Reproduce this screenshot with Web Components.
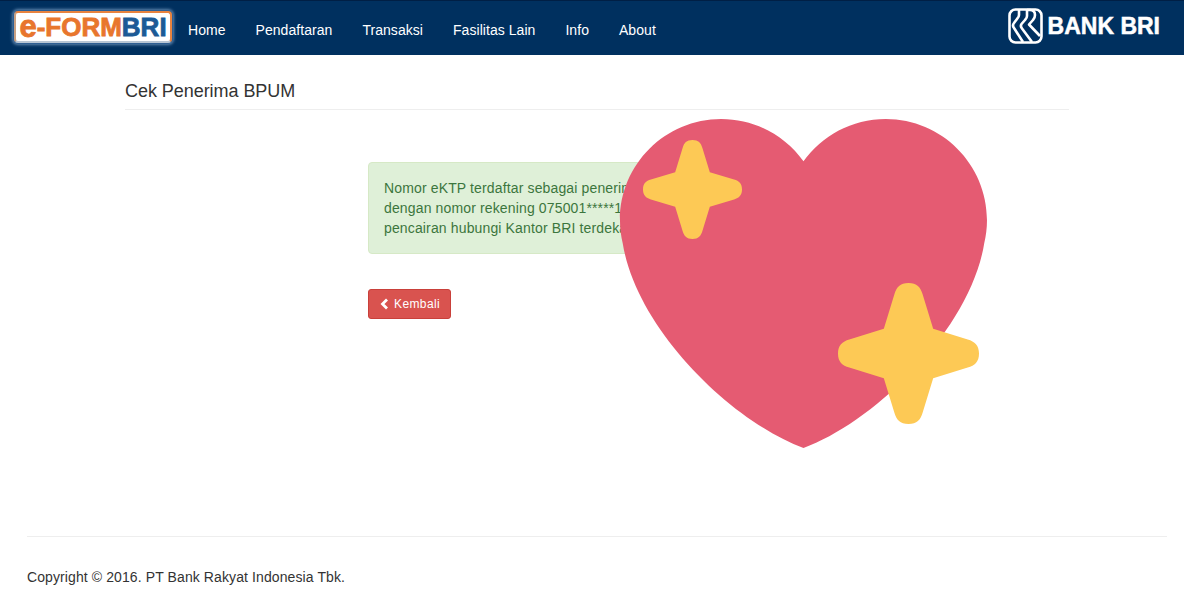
<!DOCTYPE html>
<html>
<head>
<meta charset="utf-8">
<title>Cek Penerima BPUM</title>
<style>
  html, body { margin: 0; padding: 0; background: #fff; }
  body { font: 14px/20px "Liberation Sans", Arial, sans-serif; color: #333; min-height: 616px; position: relative; overflow: hidden; }
  main { display: flow-root; height: 481px; }
</style>
</head>
<body>
<top-nav></top-nav>
<main>
  <page-title>Cek Penerima BPUM</page-title>
  <result-panel>
    <alert-box>Nomor eKTP terdaftar sebagai penerima BPUM<br>dengan nomor rekening 075001*****1234. Untuk<br>pencairan hubungi Kantor BRI terdekat.</alert-box>
    <back-button>Kembali</back-button>
  </result-panel>
</main>
<site-footer>Copyright © 2016. PT Bank Rakyat Indonesia Tbk.</site-footer>
<heart-sticker></heart-sticker>

<script>
const MENU = ["Home", "Pendaftaran", "Transaksi", "Fasilitas Lain", "Info", "About"];

class TopNav extends HTMLElement {
  constructor() {
    super();
    this.attachShadow({ mode: "open" });
  }

  static get styles() {
    return /* css */`
      :host {
        display: flex;
        align-items: center;
        height: 54px;
        border-top: 1px solid #001f45;
        background: #00305f;
        color: #fff;
      }
      .logo {
        box-sizing: border-box;
        width: 158px;
        height: 32px;
        margin: -2px 0 0 14px;
        display: flex;
        align-items: center;
        justify-content: center;
        background: #fff;
        border: 2px solid #e8833f;
        border-left-color: #c9a184;
        border-bottom-color: #b9c6d4;
        border-radius: 4px;
        box-shadow: 0 0 0 1px #2f5f93, 0 0 3px 2px #5f86ad;
        font: bold 26px/28px "Liberation Sans", Arial, sans-serif;
        -webkit-text-stroke: 0.8px currentColor;
        white-space: nowrap;
      }
      .logo .e { color: #e8762d; font-size: 31px; }
      .logo .form { color: #e8762d; }
      .logo .bri { color: #1c5a96; }
      ul {
        display: flex;
        list-style: none;
        margin: 3px 0 0 1px;
        padding: 0;
      }
      li { padding: 0 15px; font-size: 14px; line-height: 20px; letter-spacing: 0.05px; }
      .bank {
        margin-left: auto;
        margin-right: 24px;
        margin-top: -4px;
        display: flex;
        align-items: center;
        gap: 5px;
        font: bold 23px/28px "Liberation Sans", Arial, sans-serif;
        -webkit-text-stroke: 0.5px #fff;
      }
      svg { display: block; }
    `;
  }

  connectedCallback() {
    this.render();
  }

  renderMenu() {
    return MENU.map((name) => /* html */`<li>${name}</li>`).join("");
  }

  render() {
    this.shadowRoot.innerHTML = /* html */`
    <style>${TopNav.styles}</style>
    <div class="logo"><span class="e">e</span><span class="form">-FORM</span><span class="bri">BRI</span></div>
    <ul>${this.renderMenu()}</ul>
    <div class="bank">
      <svg width="35" height="36" viewBox="0 0 35 36" fill="none" stroke="#fff" stroke-width="2.6" stroke-linejoin="round">
        <rect x="1.5" y="1.5" width="32" height="33" rx="6"/>
        <path d="M11 2 V7 Q11 9 9 11 L6 15 Q4 17.5 6 20 L15 34"/>
        <path d="M19 2 V8 Q19 10 17 12 L13.5 16 Q12 18 14 20.5 L24 34"/>
        <path d="M19 2 H22 Q27 2 27 7 Q27 10 25 12 L21 16.5 L32 28"/>
      </svg>
      <span>BANK BRI</span>
    </div>`;
  }
}

class PageTitle extends HTMLElement {
  constructor() {
    super();
    this.attachShadow({ mode: "open" }).innerHTML = /* html */`
    <style>
      :host {
        display: block;
        margin: 26px 115px 0 125px;
        padding-bottom: 8px;
        border-bottom: 1px solid #eee;
        font-size: 18px;
        line-height: 20px;
        letter-spacing: -0.05px;
        color: #333;
      }
    </style>
    <slot></slot>`;
  }
}

class ResultPanel extends HTMLElement {
  constructor() {
    super();
    this.attachShadow({ mode: "open" }).innerHTML = /* html */`
    <style>
      :host {
        display: flex;
        flex-direction: column;
        align-items: flex-start;
        gap: 35px;
        margin: 52px 0 0 368px;
      }
    </style>
    <slot></slot>`;
  }
}

class AlertBox extends HTMLElement {
  constructor() {
    super();
    this.attachShadow({ mode: "open" }).innerHTML = /* html */`
    <style>
      :host {
        display: block;
        box-sizing: border-box;
        width: 458px;
        padding: 15px;
        background: #dff0d8;
        border: 1px solid #d6e9c6;
        border-radius: 4px;
        color: #3c763d;
        letter-spacing: 0.14px;
      }
    </style>
    <slot></slot>`;
  }
}

class BackButton extends HTMLElement {
  constructor() {
    super();
    this.attachShadow({ mode: "open" }).innerHTML = /* html */`
    <style>
      :host {
        display: inline-flex;
        align-items: center;
        gap: 5px;
        box-sizing: border-box;
        height: 30px;
        padding: 0 10px 0 11px;
        background: #d9534f;
        border: 1px solid #c9403a;
        border-radius: 3px;
        color: #fff;
        font-size: 12px;
        letter-spacing: 0.4px;
        line-height: 18px;
      }
      svg { display: block; }
    </style>
    <svg width="9" height="12" viewBox="0 0 9 12"><path d="M7 1.5 L2.5 6 L7 10.5" fill="none" stroke="#fff" stroke-width="2.8"/></svg>
    <slot></slot>`;
  }
}

class SiteFooter extends HTMLElement {
  constructor() {
    super();
    this.attachShadow({ mode: "open" }).innerHTML = /* html */`
    <style>
      :host {
        display: block;
        margin: 0 17px 0 27px;
        padding-top: 30px;
        border-top: 1px solid #eee;
        font-size: 14px;
        line-height: 20px;
        letter-spacing: 0.1px;
        color: #333;
      }
    </style>
    <slot></slot>`;
  }
}

class HeartSticker extends HTMLElement {
  constructor() {
    super();
    this.attachShadow({ mode: "open" }).innerHTML = /* html */`
    <style>
      :host { position: absolute; left: 0; top: 0; width: 1184px; height: 616px; pointer-events: none; }
      svg { display: block; }
    </style>
    <svg width="1184" height="616" viewBox="0 0 1184 616">
      <defs>
        <path id="star" d="M0 -100 C12 -100 17 -94 20 -84 L35 -35 L84 -20 C94 -17 100 -12 100 0 C100 12 94 17 84 20 L35 35 L20 84 C17 94 12 100 0 100 C-12 100 -17 94 -20 84 L-35 35 L-84 20 C-94 17 -100 12 -100 0 C-100 -12 -94 -17 -84 -20 L-35 -35 L-20 -84 C-17 -94 -12 -100 0 -100 Z"/>
      </defs>
      <path fill="#e55b72" transform="translate(618.8 98.8) scale(10.26)" d="M35.885 11.833c0-5.45-4.418-9.868-9.867-9.868-3.308 0-6.227 1.633-8.018 4.129-1.791-2.496-4.71-4.129-8.017-4.129-5.45 0-9.868 4.417-9.868 9.868 0 .772.098 1.52.266 2.241C1.751 22.587 11.216 31.568 18 34.034c6.783-2.466 16.249-11.447 17.617-19.959.17-.721.268-1.469.268-2.242z"/>
      <use href="#star" fill="#fdc955" transform="translate(692.5 189.5) scale(.495)"/>
      <use href="#star" fill="#fdc955" transform="translate(908.5 353.5) scale(.705)"/>
    </svg>`;
  }
}

customElements.define("top-nav", TopNav);
customElements.define("page-title", PageTitle);
customElements.define("result-panel", ResultPanel);
customElements.define("alert-box", AlertBox);
customElements.define("back-button", BackButton);
customElements.define("site-footer", SiteFooter);
customElements.define("heart-sticker", HeartSticker);
</script>
</body>
</html>
